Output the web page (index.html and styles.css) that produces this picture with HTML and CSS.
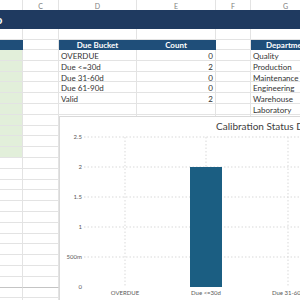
FILE: index.html
```html
<!DOCTYPE html>
<html lang="en">
<head>
    <meta charset="UTF-8">
    <meta name="viewport" content="width=device-width, initial-scale=1.0">
    <title>Calibration Dashboard</title>
    <link rel="stylesheet" href="styles.css">
</head>
<body>

    <div class="sheet" id="sheet">
        <!-- lettres de colonnes -->
        <div class="cell colhead"></div>
        <div class="cell colhead">C</div>
        <div class="cell colhead">D</div>
        <div class="cell colhead">E</div>
        <div class="cell colhead">F</div>
        <div class="cell colhead">G</div>

        <div class="title-bar"><span class="title-tail">o</span></div>

        <div class="cell"></div><div class="cell"></div><div class="cell"></div>
        <div class="cell"></div><div class="cell"></div><div class="cell"></div>

        <div class="cell head"></div>
        <div class="cell"></div>
        <div class="cell head">Due Bucket</div>
        <div class="cell head">Count</div>
        <div class="cell"></div>
        <div class="cell head left">Department</div>

        <div class="cell green"></div><div class="cell"></div>
        <div class="cell">OVERDUE</div><div class="cell num">0</div>
        <div class="cell"></div><div class="cell">Quality</div>

        <div class="cell green"></div><div class="cell"></div>
        <div class="cell">Due &lt;=30d</div><div class="cell num">2</div>
        <div class="cell"></div><div class="cell">Production</div>

        <div class="cell green"></div><div class="cell"></div>
        <div class="cell">Due 31-60d</div><div class="cell num">0</div>
        <div class="cell"></div><div class="cell">Maintenance</div>

        <div class="cell green"></div><div class="cell"></div>
        <div class="cell">Due 61-90d</div><div class="cell num">0</div>
        <div class="cell"></div><div class="cell">Engineering</div>

        <div class="cell green"></div><div class="cell"></div>
        <div class="cell">Valid</div><div class="cell num">2</div>
        <div class="cell"></div><div class="cell">Warehouse</div>

        <div class="cell green"></div><div class="cell"></div>
        <div class="cell"></div><div class="cell"></div>
        <div class="cell"></div><div class="cell">Laboratory</div>
    </div>

    <div class="chart">
        <div class="chart-title">Calibration Status Distribution</div>
        <svg class="plot" width="260" height="190">
            <g class="grid">
                <line x1="24" y1="20" x2="260" y2="20"></line>
                <line x1="24" y1="50" x2="260" y2="50"></line>
                <line x1="24" y1="80" x2="260" y2="80"></line>
                <line x1="24" y1="110" x2="260" y2="110"></line>
                <line x1="24" y1="140" x2="260" y2="140"></line>
                <line x1="65" y1="20" x2="65" y2="170"></line>
                <line x1="146" y1="20" x2="146" y2="170"></line>
                <line x1="228" y1="20" x2="228" y2="170"></line>
            </g>
            <g class="axis-y">
                <text x="22" y="22">2.5</text>
                <text x="22" y="52">2</text>
                <text x="22" y="82">1.5</text>
                <text x="22" y="112">1</text>
                <text x="22" y="142">500m</text>
                <text x="22" y="172">0</text>
            </g>
            <rect class="bar" x="130" y="50" width="32" height="120"></rect>
            <g class="axis-x">
                <text x="65" y="178">OVERDUE</text>
                <text x="146" y="178">Due &lt;=30d</text>
                <text x="228" y="178">Due 31-60d</text>
            </g>
        </svg>
    </div>

    <script>
        // lignes vides sous le tableau
        const sheet = document.getElementById('sheet');
        for (let r = 0; r < 18; r++) {
            for (let c = 0; c < 6; c++) {
                const cell = document.createElement('div');
                cell.className = (c === 0 && r < 4) ? 'cell green' : 'cell';
                if (r === 15 && c < 2) {
                    cell.classList.add('edge');
                }
                sheet.appendChild(cell);
            }
        }
    </script>
</body>
</html>
```

FILE: styles.css
```css
body {
    margin: 0;
    width: 300px;
    height: 300px;
    overflow: hidden;
    position: relative;
    background-color: #fff;
    font-family: "Lato", "Liberation Sans", sans-serif;
    color: #333;
}

.sheet {
    display: grid;
    grid-template-columns: 23px 36px 78px 79px 35px 70px;
    grid-template-rows: 10px 19px 11px 10px;
    grid-auto-rows: 10.8px;
    font-size: 8px;
}

.cell {
    border-right: 1px solid #e3e3e3;
    border-bottom: 1px solid #e3e3e3;
    padding: 0 2px;
    line-height: 12px;
    white-space: nowrap;
    overflow: hidden;
}

.colhead {
    font-size: 7px;
    line-height: 12px;
    color: #808080;
    text-align: center;
    border-bottom: none;
}

.title-bar {
    grid-column: 1 / -1;
    background-color: #1f3a60;
    color: #fff;
    font-weight: bold;
    font-size: 11px;
    line-height: 19px;
}

.title-tail {
    display: inline-block;
    margin-left: -4px;
}

.head {
    background-color: #1f4e79;
    color: #fff;
    font-weight: bold;
    text-align: center;
    line-height: 10px;
    border-bottom: none;
    border-right-color: #1f4e79;
}

.head.left {
    text-align: left;
    padding-left: 15px;
}

.num {
    text-align: right;
}

.green {
    background-color: #e2efda;
}

.edge {
    border-bottom: 1px solid #c4c4c4;
}

.chart {
    position: absolute;
    left: 59px;
    top: 116px;
    width: 260px;
    height: 190px;
    background-color: #fff;
    border: 1px solid #d9d9d9;
}

.chart-title {
    position: absolute;
    left: 156px;
    top: 3px;
    font-size: 10px;
    color: #404040;
    white-space: nowrap;
}

.plot {
    display: block;
}

.grid line {
    stroke: #d9d9d9;
    stroke-width: 1;
    stroke-dasharray: 1.5 2;
}

.axis-y text {
    font-size: 6px;
    fill: #595959;
    text-anchor: end;
}

.axis-x text {
    font-size: 6px;
    fill: #595959;
    text-anchor: middle;
}

.bar {
    fill: #1b5e82;
}
```
